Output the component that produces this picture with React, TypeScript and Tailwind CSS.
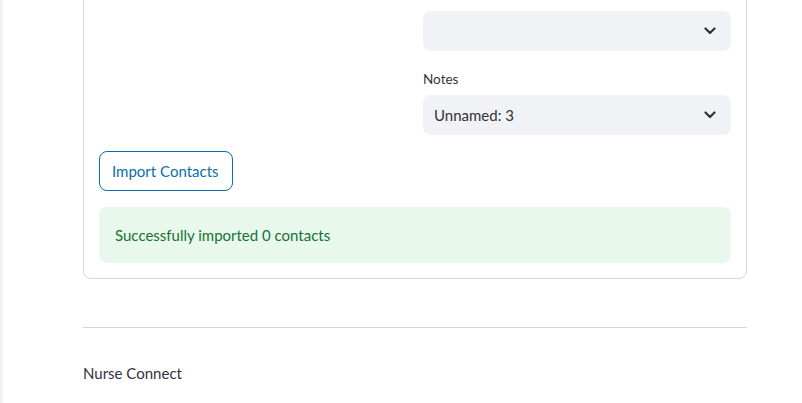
import React from 'react'

const Chevron = () => (
    <svg width="12" height="8" viewBox="0 0 12 8" fill="none">
        <path d="M1.5 1.5 L6 6 L10.5 1.5" stroke="#31333f" strokeWidth="2.2" strokeLinecap="round" strokeLinejoin="round" />
    </svg>
)

const Select = ({ value }: { value?: string }) => {
    return (
        <div className='flex h-10 items-center justify-between rounded-lg bg-[#f0f2f6] pl-[11px] pr-[15px] text-[15px] text-[#31333f]'>
            <span>{value}</span>
            <Chevron />
        </div>
    )
}

const Field = ({ label, value }: { label: string, value?: string }) => {
    return (
        <div className='flex flex-col'>
            <label className='mb-1 h-6 flex items-center text-[13.5px] text-[#31333f]'>{label}</label>
            <Select value={value} />
        </div>
    )
}

const App = () => {
    return (
        <div className='flex h-[403px] w-full overflow-hidden bg-white' style={{ fontFamily: 'Lato, "Noto Sans", sans-serif' }}>
            <div className='w-[3px] shrink-0 bg-[#f0f2f6]'></div>
            <div className='w-[664px] shrink-0 ml-[80px] flex flex-col'>
                <div className='mt-[-34px] rounded-lg border border-[#d6d6d9] px-[15px] pt-4 pb-[15px] flex flex-col gap-4'>
                    <div className='grid grid-cols-2 gap-4'>
                        <div></div>
                        <div className='flex flex-col gap-4'>
                            <Field label='Phone' />
                            <Field label='Notes' value='Unnamed: 3' />
                        </div>
                    </div>
                    <div>
                        <button className='h-10 rounded-lg border border-[#0a6fae] bg-white pl-3 pr-[13px] text-[15px] text-[#0a6fae]'>
                            Import Contacts
                        </button>
                    </div>
                    <div className='flex h-14 items-center rounded-lg bg-[#e8f8ec] px-4 text-[15px] text-[#177233]'>
                        Successfully imported 0 contacts
                    </div>
                </div>
                <div className='mt-12 border-t border-[#d6d6d9]'></div>
                <div className='mt-[33px] h-6 flex items-center text-[15px] text-[#31333f]'>Nurse Connect</div>
            </div>
        </div>
    )
}

export default App
